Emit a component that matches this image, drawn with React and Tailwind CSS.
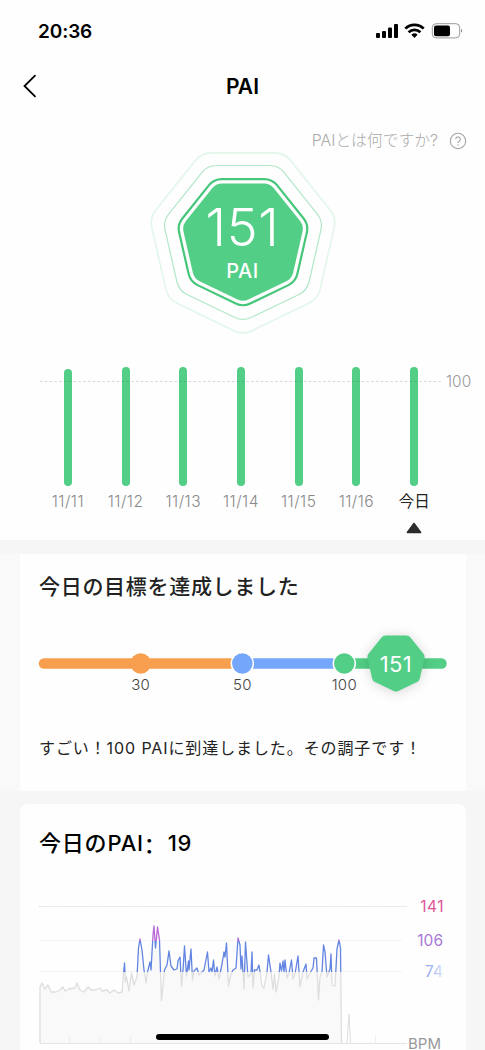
const days = [
  { label: "11/11", height: 117 },
  { label: "11/12", height: 119 },
  { label: "11/13", height: 119 },
  { label: "11/14", height: 119 },
  { label: "11/15", height: 119 },
  { label: "11/16", height: 119 },
  { label: "今日", height: 119, today: true },
]

const heartRate = [
  [40, 1043], [40, 987], [42, 983], [45, 989], [48, 985], [51, 992], [56, 992], [60, 990],
  [63, 987], [65, 991], [69, 989], [75, 988], [77, 983], [80, 990], [84, 992], [88, 987],
  [91, 990], [95, 990], [100, 988], [102, 991], [107, 990], [110, 993], [114, 990], [118, 993],
  [122, 992], [124.5, 963], [125.5, 982], [126.5, 977], [129, 991], [131.5, 973], [134, 985],
  [137, 977], [138.5, 948], [140, 939], [142, 950], [144, 970], [146, 983], [147.5, 972],
  [150, 962], [151, 970], [153, 935], [154, 926], [155.5, 948], [157.5, 927], [159.5, 940],
  [160.5, 972], [161.5, 1001], [163, 985], [164.5, 970], [167, 965], [169, 951], [171, 966],
  [174, 970], [177, 969], [178, 961], [180, 957], [181.5, 986], [183, 970], [184.5, 946],
  [186.5, 976], [188.5, 961], [189, 970], [191, 949], [192.5, 980], [194, 971], [197, 968],
  [199, 975], [204, 970], [207.5, 952], [209, 972], [211, 968], [212, 972], [213.5, 960],
  [215, 976], [217, 967], [219, 979], [222, 964], [224, 952], [225, 957], [226.5, 943],
  [228.5, 986], [231, 974], [233, 970], [236, 968], [238, 938], [240, 945], [241, 969],
  [242, 956], [244, 989], [245.5, 942], [248, 977], [251, 974], [252, 952], [253, 988],
  [254.5, 970], [257, 970], [259, 965], [260, 972], [262, 986], [264, 988], [267, 972],
  [268.5, 955], [271, 972], [273, 989], [274.5, 974], [276, 992], [279, 976], [280, 963],
  [281.5, 971], [283, 961], [284, 972], [285, 960], [287, 978], [289, 973], [291.5, 960],
  [293, 979], [295, 974], [298, 956], [300, 987], [303, 972], [306, 964], [307, 979],
  [310, 973], [313, 968], [314, 958], [316.5, 958], [318.5, 1000], [320, 977], [322, 972],
  [323.5, 945], [325, 952], [327, 977], [330, 969], [331, 954], [332, 985], [335, 986],
  [337, 949], [339, 940], [340.5, 948], [341.5, 1043],
]

// heptagon standing on its point, with softened corners
const heptagon = (cx, cy, r, round) => {
  const pts = Array.from({ length: 7 }, (_, i) => {
    const a = Math.PI / 2 + (i * 2 * Math.PI) / 7
    return [cx + r * Math.cos(a), cy + r * Math.sin(a)]
  })
  const toward = (a, b) => {
    const len = Math.hypot(b[0] - a[0], b[1] - a[1])
    return [a[0] + ((b[0] - a[0]) * round) / len, a[1] + ((b[1] - a[1]) * round) / len]
  }
  return (
    pts
      .map((p, i) => {
        const start = toward(p, pts[(i + 6) % 7])
        const end = toward(p, pts[(i + 1) % 7])
        return `${i ? "L" : "M"}${start.join(" ")}Q${p.join(" ")} ${end.join(" ")}`
      })
      .join("") + "Z"
  )
}

function StatusBar() {
  return (
    <div className="flex h-[60px] items-center justify-between pl-[38px] pr-[22px] pt-[2px]">
      <span className="text-[19px] font-semibold leading-none tracking-[-0.1px] text-black">20:36</span>
      <svg width="88" height="18" viewBox="375 22 88 18">
        <rect x="376" y="33" width="4" height="5" rx="1" />
        <rect x="382" y="31" width="4" height="7" rx="1" />
        <rect x="388" y="27.5" width="4" height="10.5" rx="1" />
        <rect x="394" y="24" width="4" height="14" rx="1" />
        <g fill="none" stroke="#000" strokeWidth="2.7">
          <path d="M405.3 28.6a13.2 13.2 0 0 1 18.4 0" />
          <path d="M408.6 32.2a8.4 8.4 0 0 1 11.8 0" />
        </g>
        <path d="M411.4 34.8a4.5 4.5 0 0 1 6.2 0L414.5 38z" />
        <rect x="432.3" y="23.7" width="27.4" height="14.2" rx="3.8" fill="none" stroke="#999" />
        <rect x="434" y="25.6" width="16" height="10.6" rx="2" />
        <path d="M461.2 28.8q2 2 0 4z" fill="#777" />
      </svg>
    </div>
  )
}

function PaiBadge() {
  return (
    <div className="relative mx-auto h-[184px] w-[188px]">
      <svg width="188" height="184" viewBox="149 151 188 184">
        <path d={heptagon(243, 239.2, 95.8, 10)} fill="none" stroke="#e2f6ea" strokeWidth="1.6" />
        <path d={heptagon(243, 239.4, 82, 9)} fill="none" stroke="#b2e7c9" strokeWidth="1.2" />
        <path d={heptagon(243, 239.7, 67.3, 8)} fill="none" stroke="#45c67a" strokeWidth="2.2" />
        <path d={heptagon(243, 239.7, 62.4, 6)} fill="#52ce86" />
      </svg>
      <div className="absolute inset-0 flex flex-col items-center text-white">
        <span className="mt-[51px] text-[52px] font-light leading-[52px] tracking-[0.8px]">151</span>
        <span className="mt-[5px] text-[20px] font-medium leading-[24px] tracking-[0.5px]">PAI</span>
      </div>
    </div>
  )
}

function WeekChart() {
  return (
    <div className="relative ml-[39px] mt-[32px] w-[404px]">
      <div className="grid grid-cols-7">
        {days.map((day) => (
          <div key={day.label} className="flex flex-col items-center">
            <div className="flex h-[119px] items-end">
              <div className="w-2 rounded-full bg-[#52ce86]" style={{ height: day.height }} />
            </div>
            <span
              className={`mt-[6px] text-[15.5px] leading-5 ${
                day.today ? "text-[#222]" : "font-light tracking-[0.5px] text-[#888]"
              }`}
            >
              {day.label}
            </span>
            {day.today && (
              <svg className="mt-[10px]" width="16" height="12" viewBox="0 0 16 12">
                <path d="M8 1.5L14.6 10.5H1.4z" fill="#2d2d2d" stroke="#2d2d2d" strokeWidth="1.6" strokeLinejoin="round" />
              </svg>
            )}
          </div>
        ))}
      </div>
      <svg className="absolute left-0 top-[13px]" width="404" height="3">
        <path d="M1 1.5H402" stroke="#555" strokeOpacity="0.24" strokeWidth="1.2" strokeDasharray="2.4 2.4" />
      </svg>
      <span className="absolute left-[407px] top-[5px] text-[15.5px] font-light leading-5 text-[#999]">100</span>
    </div>
  )
}

function GoalCard() {
  return (
    <section className="ml-5 h-[237px] w-[446px] rounded-b bg-[#fefefe] pt-[18px]">
      <h2 className="pl-[19px] text-[21px] font-medium leading-[30px] tracking-[0.7px] text-[#222]">
        今日の目標を達成しました
      </h2>
      <svg className="mt-[18px]" width="446" height="90" viewBox="20 620 446 90">
        <path d="M44 663.5H243" stroke="#f79f4e" strokeWidth="10.5" strokeLinecap="round" />
        <path d="M242 663.5H344" stroke="#74a6fb" strokeWidth="10.5" />
        <path d="M344 663.5H441.5" stroke="#52ce86" strokeWidth="10.5" strokeLinecap="round" />
        <circle cx="140.7" cy="663.5" r="10.3" fill="#f79f4e" />
        <circle cx="242.3" cy="663.5" r="11" fill="#74a6fb" stroke="#fff" strokeWidth="1.5" />
        <circle cx="344.3" cy="663.5" r="11" fill="#52ce86" stroke="#fff" strokeWidth="1.5" />
        <path d={heptagon(396, 662.3, 29.8, 2.5)} fill="#52ce86" className="drop-shadow-[0_1px_6px_rgba(0,0,0,0.16)]" />
        <text x="396" y="671.5" textAnchor="middle" fill="#fff" className="text-[22px] tracking-[0.4px]">151</text>
        <g textAnchor="middle" fill="#444" className="text-[15px] font-light tracking-[0.3px]">
          <text x="140.7" y="690">30</text>
          <text x="242.5" y="690">50</text>
          <text x="344.3" y="690">100</text>
        </g>
      </svg>
      <p className="mt-[26px] whitespace-nowrap pl-[19px] text-[16px] leading-6 tracking-[0.9px] text-[#222]">
        すごい！100 PAIに到達しました。その調子です！
      </p>
    </section>
  )
}

function TodayCard() {
  const line = heartRate.map((p) => p.join(",")).join(" ")
  return (
    <section className="ml-5 h-[260px] w-[446px] rounded-t-lg bg-[#fefefe] pt-[24px]">
      <h2 className="flex h-[30px] pl-[19px] text-[22px] font-medium leading-[30px] tracking-[0.8px] text-black">
        今日のPAI
        <span className="font-['Noto_Sans_CJK_SC',sans-serif]" lang="zh-CN">：</span>
        <span className="pl-px">19</span>
      </h2>
      <svg className="mt-[32px]" width="446" height="170" viewBox="20 890 446 170">
        <defs>
          <linearGradient id="zones" gradientUnits="userSpaceOnUse" x1="0" y1="900" x2="0" y2="1050">
            <stop offset="0.273" stopColor="#b967d6" />
            <stop offset="0.273" stopColor="#6285e2" />
            <stop offset="0.48" stopColor="#6285e2" />
            <stop offset="0.48" stopColor="#dedede" />
          </linearGradient>
          <linearGradient id="fade" gradientUnits="userSpaceOnUse" x1="424" y1="0" x2="444" y2="0">
            <stop offset="0" stopColor="#7d9cf0" />
            <stop offset="1" stopColor="#dfe6fa" />
          </linearGradient>
        </defs>
        <path d="M39 906.5H407" stroke="#ddd" strokeDasharray="1.5 1" />
        <path d="M39 940.5H402M39 971.5H402" stroke="#f4f4f4" />
        <polygon points={line} fill="#f9f9f9" />
        <path d="M40 1043.5H407" stroke="#e4e4e4" />
        <path d="M69.5 1036v7M100.5 1036v7M130.5 1036v7M375.5 1036v7" stroke="#eee" />
        <polyline points={line} fill="none" stroke="url(#zones)" strokeWidth="1.3" strokeLinejoin="round" />
        <path d="M347 1043L349 1014L350.5 1043" fill="none" stroke="#dedede" />
        <g textAnchor="end" className="text-[15.5px]">
          <text x="444" y="912" fill="#e0559a" className="tracking-[0.5px]">141</text>
          <text x="443" y="946" fill="#a879d6">106</text>
          <text x="443" y="977" fill="url(#fade)">74</text>
          <text x="441" y="1049" fill="#999" className="text-[15px]">BPM</text>
        </g>
      </svg>
    </section>
  )
}

export default function App() {
  return (
    <div className="relative h-[1050px] w-[485px] overflow-hidden bg-[#f6f6f6] font-['Inter','Noto_Sans_CJK_JP',sans-serif]">
      <div className="h-[540px] bg-[#fefefe]">
        <StatusBar />
        <header className="grid h-[52px] grid-cols-3 items-center px-[14px]">
          <svg className="ml-[8px]" width="16" height="24" viewBox="0 0 16 24" fill="none" stroke="#000" strokeWidth="1.8" strokeLinecap="round">
            <path d="M13 1.7L2.5 12L13 22.3" />
          </svg>
          <h1 className="text-center text-[21px] font-semibold leading-none text-black">PAI</h1>
        </header>
        <div className="flex h-[39px] items-end justify-end gap-[11px] pr-[18px]">
          <span className="text-[15.8px] font-light leading-5 text-[#aaa]">PAIとは何ですか?</span>
          <svg className="mb-[1px]" width="18" height="18" viewBox="0 0 18 18" fill="none" stroke="#a4a4a4" strokeWidth="1.1">
            <circle cx="9" cy="9" r="7.7" />
            <path d="M6.7 7.2a2.3 2.3 0 1 1 3.5 2q-1.2.7-1.2 1.9M9 12.3v1.2" />
          </svg>
        </div>
        <PaiBadge />
        <WeekChart />
      </div>
      <div className="h-[14px]" />
      <div className="bg-[#f9f9f9]">
        <GoalCard />
      </div>
      <div className="h-[13px]" />
      <TodayCard />
      <div className="absolute bottom-[10px] left-[156px] h-[6px] w-[173px] rounded-full bg-black" />
    </div>
  )
}
